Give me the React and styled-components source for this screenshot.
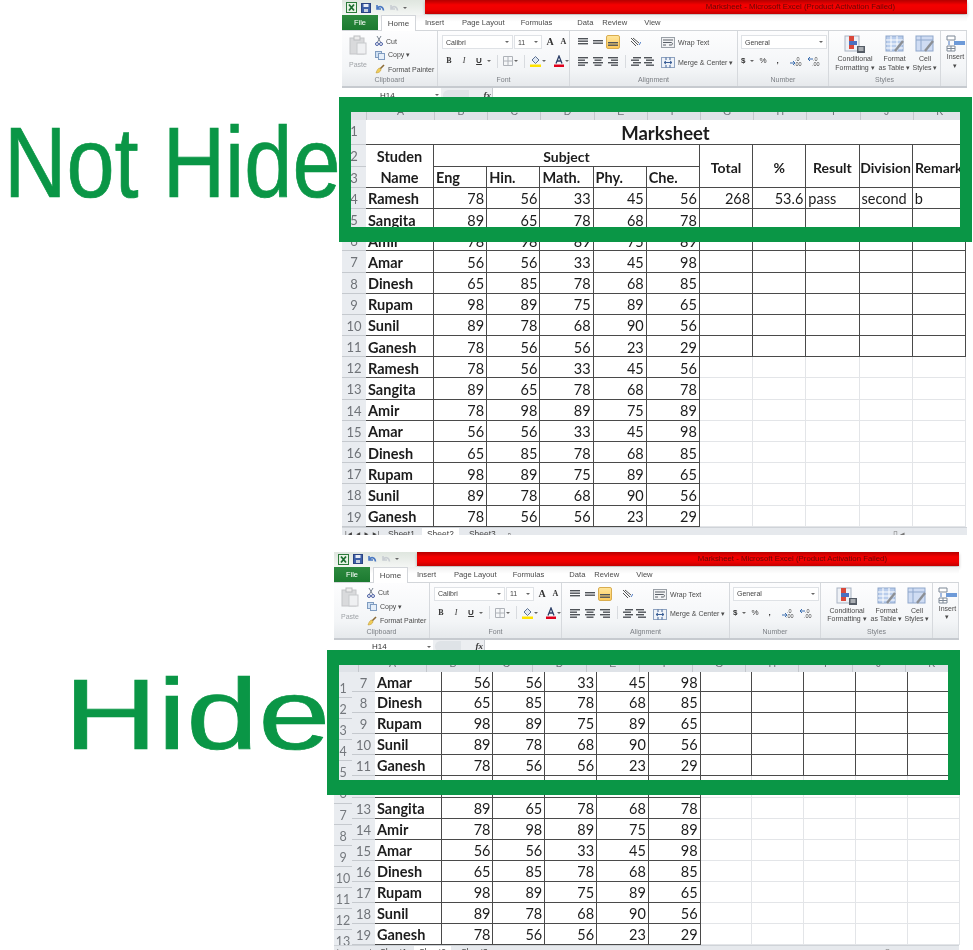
import React from 'react'
import styled, { createGlobalStyle } from 'styled-components'

const GREEN = '#0a9646'

const Global = createGlobalStyle`
  html, body { margin: 0; padding: 0; background: #fff; }
  body { width: 973px; height: 950px; overflow: hidden; font-family: "Liberation Sans", Arial, sans-serif; }
`

const Page = styled.div`
  display: flex;
  flex-direction: column;
  gap: 17px;
  width: 973px;
`

const Section = styled.section`
  display: flex;
  align-items: flex-start;
`

const LabelSlot = styled.div`
  flex: none;
  width: ${({ $width }) => $width}px;
  padding-top: 112px;
`

const BigLabel = styled.div`
  margin-left: ${({ $left }) => $left}px;
  font: 100px/100px "Liberation Sans", Arial, sans-serif;
  color: ${GREEN};
  -webkit-text-stroke: 0.7px ${GREEN};
  white-space: nowrap;
  transform: scaleX(${({ $scale }) => $scale});
  transform-origin: left center;
`

const ShotWrap = styled.div`
  position: relative;
  flex: none;
  width: 625px;
`

const Shot = styled.div`
  display: flex;
  flex-direction: column;
  filter: blur(0.4px);
  color: #4a4a4a;
  font-size: 7px;
`

const Frame = styled.div`
  position: absolute;
  left: ${({ $left }) => $left}px;
  top: ${({ $top }) => $top}px;
  width: 633px;
  height: 145px;
  box-sizing: border-box;
  border: solid ${GREEN};
  border-width: 15px 12px;
`

/* title bar */
const TitleBar = styled.div`
  display: flex;
  height: 15px;
`

const QuickAccess = styled.div`
  display: flex;
  align-items: center;
  gap: 4px;
  width: 83px;
  padding-left: 4px;
  box-sizing: border-box;
  background: linear-gradient(#dfe6df, #f4f6f4);
`

const RedBar = styled.div`
  flex: 1;
  text-align: right;
  padding-right: 72px;
  font-size: 7.8px;
  line-height: 14px;
  height: 14px;
  color: #640806;
  background: linear-gradient(#b40000, #f50000 35%, #ee0000 70%, #c20000);
  box-shadow: 0 2px 3px rgba(0, 0, 0, 0.28);
`

/* tabs */
const TabRow = styled.div`
  display: flex;
  align-items: stretch;
  height: 16px;
  background: linear-gradient(#f0f0f0, #fff 45%);
  border-bottom: 1px solid #d3d6da;
  box-sizing: border-box;
`

const FileTab = styled.div`
  width: 36px;
  margin-right: 3px;
  text-align: center;
  line-height: 15px;
  color: #fff;
  font-size: 7.5px;
  background: linear-gradient(#2d8a3f, #1c7a30);
`

const HomeTab = styled.div`
  width: 35px;
  height: 16px;
  box-sizing: border-box;
  text-align: center;
  line-height: 15px;
  font-size: 8px;
  background: #fff;
  border: 1px solid #d3d6da;
  border-bottom: 0;
`

const Tab = styled.div`
  line-height: 15px;
  font-size: 7.6px;
  margin-left: ${({ $gap }) => $gap}px;
`

/* ribbon */
const Ribbon = styled.div`
  display: flex;
  height: 57px;
  box-sizing: border-box;
  background: linear-gradient(#fdfdfe, #f3f5f7 70%, #e6e9ec);
  border-bottom: 2px solid #c6cacf;
`

const Group = styled.div`
  flex: none;
  display: flex;
  flex-direction: column;
  width: ${({ $width }) => $width}px;
  box-sizing: border-box;
  border-right: 1px solid #d6d9dd;
`

const GroupBody = styled.div`
  flex: 1;
  display: flex;
  gap: ${({ $gap }) => $gap || 0}px;
  padding: 4px 0 0 ${({ $pad }) => $pad || 0}px;
`

const GroupName = styled.div`
  height: 11px;
  line-height: 10px;
  text-align: center;
  color: #7b7f84;
  font-size: 7px;
`

const PasteCol = styled.div`
  width: 26px;
  display: flex;
  flex-direction: column;
  align-items: flex-start;
  color: #a0a4a8;
  line-height: 9px;
  gap: 5px;
`

const SmallCol = styled.div`
  display: flex;
  flex-direction: column;
  gap: 4px;
  padding-top: 1px;
`

const SmallRow = styled.div`
  display: flex;
  align-items: center;
  gap: ${({ $gap }) => $gap ?? 3}px;
  height: ${({ $height }) => $height || 10}px;
  white-space: nowrap;
`

const Stack = styled.div`
  display: flex;
  flex-direction: column;
  gap: ${({ $gap }) => $gap ?? 5}px;
  padding-top: ${({ $top }) => $top || 0}px;
`

const Field = styled.div`
  width: ${({ $width }) => $width}px;
  height: 14px;
  box-sizing: border-box;
  display: flex;
  align-items: center;
  justify-content: space-between;
  padding: 0 3px;
  background: #fff;
  border: 1px solid #dfe2e6;
  color: #444;
  font-size: 7px;
`

const Caret = styled.span`
  width: 0;
  height: 0;
  border: 2px solid transparent;
  border-top: 2.5px solid #666;
  border-bottom: 0;
  flex: none;
`

const Glyph = styled.span`
  font: ${({ $bold }) => ($bold ? 700 : 400)} ${({ $size }) => $size || 8}px/1 ${({ $serif }) =>
    $serif ? '"Liberation Serif", serif' : '"Liberation Sans", sans-serif'};
  font-style: ${({ $italic }) => ($italic ? 'italic' : 'normal')};
  text-decoration: ${({ $under }) => ($under ? 'underline' : 'none')};
  color: ${({ $color }) => $color || '#333'};
`

const ToolCell = styled.span`
  display: inline-flex;
  align-items: center;
  justify-content: center;
  flex: none;
  width: ${({ $width }) => $width || 14}px;
  height: 14px;
  border-radius: 2px;
  background: ${({ $on }) => ($on ? 'linear-gradient(#ffe59a, #fdc95a)' : 'none')};
  border: ${({ $on }) => ($on ? '1px solid #d9ad4f' : '0')};
  box-sizing: border-box;
`

const Divider = styled.span`
  width: 1px;
  height: 13px;
  background: #d8dbdf;
`

const BigButton = styled.div`
  display: flex;
  flex-direction: column;
  align-items: center;
  width: ${({ $width }) => $width}px;
  text-align: center;
  line-height: 8.5px;
  gap: 1px;
  white-space: nowrap;
`

/* formula bar */
const FormulaBar = styled.div`
  display: flex;
  align-items: center;
  height: 14px;
  margin-bottom: 2px;
  background: #eceef1;
`

const NameBox = styled.div`
  display: flex;
  align-items: center;
  justify-content: space-between;
  width: 99px;
  height: 100%;
  box-sizing: border-box;
  padding: 0 2px 0 38px;
  background: #fff;
  color: #333;
  font-size: 8px;
`

const FxZone = styled.div`
  display: flex;
  align-items: center;
  justify-content: space-between;
  width: 51px;
  padding: 0 1px 0 2px;
  box-sizing: border-box;
`

const Bubble = styled.span`
  width: 26px;
  height: 11px;
  border-radius: 6px 0 0 6px;
  background: #dfe3e7;
`

const FormulaInput = styled.div`
  flex: 1;
  height: 100%;
  background: #fff;
  border-left: 1px solid #c9cdd2;
`

/* sheet */
const ColumnHeader = styled.div`
  display: flex;
  height: 16px;
  overflow: hidden;
  background: #dfe3e8;
  font: 10.5px/15px "Liberation Sans", sans-serif;
  color: #6d7177;
`

const Corner = styled.div`
  flex: none;
  width: 24px;
  border-right: 1px solid #c3c7cc;
`

const ColumnName = styled.div`
  flex: none;
  width: ${({ $width }) => $width}px;
  text-align: center;
  box-sizing: border-box;
  border-right: 1px solid #c3c7cc;
`

const SheetBody = styled.div`
  display: flex;
`

const RowStrip = styled.div`
  flex: none;
  width: 18px;
  padding-top: 5px;
  box-sizing: border-box;
  background: #e9ecf0;
  overflow: hidden;
  height: ${({ $height }) => $height}px;
`

const StripNumber = styled.div`
  height: 21.14px;
  box-sizing: border-box;
  text-align: center;
  font: 400 12.5px/24px Lato, sans-serif;
  color: #74787d;
  border-bottom: 1px solid #c5c9ce;
`

const Grid = styled.div`
  display: grid;
  grid-template-columns: ${({ $columns }) => $columns};
  grid-template-rows: ${({ $rows }) => $rows};
  background: #fff;
`

const RowHead = styled.div`
  background: #e9ecf0;
  color: #6f7378;
  font: 400 13px/23px Lato, sans-serif;
  text-align: center;
  box-sizing: border-box;
  border-bottom: 1px solid #c5c9ce;
  overflow: hidden;
`

const Cell = styled.div`
  grid-column: span ${({ $cols }) => $cols || 1};
  grid-row: span ${({ $rows }) => $rows || 1};
  display: flex;
  align-items: center;
  justify-content: ${({ $align }) => $align || 'flex-start'};
  padding: 2px 2px 0;
  box-sizing: border-box;
  min-width: 0;
  white-space: nowrap;
  font-family: Lato, sans-serif;
  font-size: ${({ $size }) => $size || 14.5}px;
  font-weight: ${({ $bold }) => ($bold ? 700 : 400)};
  color: #1c1c1c;
  border-right: 1px solid ${({ $light }) => ($light ? '#e3e5e8' : '#4a4a4a')};
  border-bottom: ${({ $open, $light }) =>
    $open ? '0' : `1px solid ${$light ? '#e3e5e8' : '#4a4a4a'}`};
`

const SheetTabs = styled.div`
  display: flex;
  height: 8px;
  overflow: hidden;
  background: #e6e9ed;
  border-top: 1px solid #cfd3d8;
  box-sizing: border-box;
  font-size: 8.5px;
  line-height: 12px;
  color: #444;
`

const SheetNav = styled.div`
  flex: none;
  width: 43px;
  margin-left: 3px;
  font-size: 6.5px;
  white-space: nowrap;
`

const SheetTab = styled.div`
  padding: 0 ${({ $active }) => ($active ? 5 : 0)}px;
  margin-left: ${({ $gap }) => $gap || 0}px;
  background: ${({ $active }) => ($active ? '#fff' : 'none')};
`

const Scroller = styled.div`
  margin-left: auto;
  margin-right: 62px;
  color: #777;
`

/* drawings */
const Svg = ({ w, h, children }) => (
  <svg width={w} height={h} viewBox={`0 0 ${w} ${h}`} style={{ flex: 'none', display: 'block' }}>
    {children}
  </svg>
)

const Bars = ({ rows, color = '#4f5358' }) => (
  <Svg w={12} h={10}>
    {rows.map(([x, y, w], i) => (
      <rect key={i} x={x} y={y} width={w} height="1.4" fill={color} />
    ))}
  </Svg>
)

const ExcelLogo = () => (
  <Svg w={11} h={11}>
    <rect x="0.5" y="0.5" width="10" height="10" fill="#e9f3e6" stroke="#2b7a3a" />
    <path d="M3 2.5 L8 8.5 M8 2.5 L3 8.5" stroke="#1d6e31" strokeWidth="1.8" />
  </Svg>
)

const SaveIcon = () => (
  <Svg w={10} h={10}>
    <rect x="0.5" y="0.5" width="9" height="9" fill="#3d5fa8" stroke="#2b4482" />
    <rect x="2.5" y="1" width="5" height="3" fill="#e8edf6" />
    <rect x="3" y="6" width="4" height="3" fill="#c7d0df" />
  </Svg>
)

const UndoIcon = ({ color = '#4a78c2' }) => (
  <Svg w={10} h={10}>
    <path d="M2 2 V6 H6 M2.5 5.5 C4 2.5 8 3 8.5 7.5" fill="none" stroke={color} strokeWidth="1.6" />
  </Svg>
)

const PasteIcon = () => (
  <Svg w={18} h={20}>
    <rect x="1" y="3" width="14" height="16" fill="#d9dadc" stroke="#c4c5c8" />
    <rect x="5" y="1" width="6" height="4" fill="#ececec" stroke="#bcbdc0" />
    <rect x="8" y="8" width="9" height="11" fill="#eff0f2" stroke="#c8c9cc" />
  </Svg>
)

const CutIcon = () => (
  <Svg w={8} h={10}>
    <path d="M2 0 L5.5 6 M6 0 L2.5 6" stroke="#7a8490" strokeWidth="1" />
    <circle cx="2" cy="8" r="1.5" fill="none" stroke="#4b5fa3" />
    <circle cx="6" cy="8" r="1.5" fill="none" stroke="#4b5fa3" />
  </Svg>
)

const CopyIcon = () => (
  <Svg w={10} h={9}>
    <rect x="0.5" y="0.5" width="6" height="6" fill="#cfe0f3" stroke="#7f9cc0" />
    <rect x="3.5" y="2.5" width="6" height="6" fill="#e6eff9" stroke="#7f9cc0" />
  </Svg>
)

const BrushIcon = () => (
  <Svg w={10} h={10}>
    <path d="M5 5 L9 1" stroke="#8a6a35" strokeWidth="1.6" />
    <path d="M1 9 C2 6 3 4 5 4 L6 5.5 C6 7.5 3.5 9 1 9 Z" fill="#f0cd5a" stroke="#b89330" strokeWidth="0.5" />
  </Svg>
)

const FillIcon = () => (
  <Svg w={11} h={12}>
    <path d="M2 5 L5.5 1.5 L9 5 L5.5 8.5 Z" fill="#dfe7f2" stroke="#5c7192" />
    <rect x="0" y="9.5" width="11" height="2.5" fill="#ffe300" />
  </Svg>
)

const FontColorIcon = () => (
  <Svg w={10} h={12}>
    <path d="M2 8.5 L5 1 L8 8.5 M3.2 6 H6.8" fill="none" stroke="#2c3e66" strokeWidth="1.3" />
    <rect x="0" y="9.5" width="10" height="2.5" fill="#e0001b" />
  </Svg>
)

const BorderIcon = () => (
  <Svg w={10} h={10}>
    <path d="M0.5 0.5 H9.5 V9.5 H0.5 Z M5 0.5 V9.5 M0.5 5 H9.5" fill="none" stroke="#aeb2b8" />
  </Svg>
)

const OrientIcon = () => (
  <Svg w={11} h={10}>
    <path d="M1 1 L8 8 M3 1 L9 6 M1 4 L6 9" stroke="#555" strokeWidth="1" />
    <path d="M9 8 L11 5" stroke="#4a78c2" strokeWidth="1" />
  </Svg>
)

const WrapIcon = () => (
  <Svg w={14} h={11}>
    <rect x="0.5" y="0.5" width="13" height="10" fill="#f1f2f4" stroke="#9aa0a7" />
    <path d="M2 3 H12 M2 5.5 H10 C12 5.5 12 8 10 8 H8 M2 8 H5" fill="none" stroke="#5a6068" />
  </Svg>
)

const MergeIcon = () => (
  <Svg w={14} h={11}>
    <rect x="0.5" y="0.5" width="13" height="10" fill="#eef2f8" stroke="#8fa3c0" />
    <path d="M5 0.5 V3 M5 8 V10.5 M9 0.5 V3 M9 8 V10.5 M3 5.5 H11 M3 5.5 L5 4 M3 5.5 L5 7 M11 5.5 L9 4 M11 5.5 L9 7" fill="none" stroke="#3b5f96" />
  </Svg>
)

const DecimalIcon = ({ flip }) => (
  <Svg w={13} h={10}>
    <path d={flip ? 'M1 3 H6 M1 3 L3 1 M1 3 L3 5' : 'M1 7 H6 M6 7 L4 5 M6 7 L4 9'} stroke="#3c6fb0" strokeWidth="1" fill="none" />
    <text x="6" y="4.5" fontSize="5.5" fill="#444" fontFamily="Liberation Sans">.0</text>
    <text x="5" y="9.5" fontSize="5.5" fill="#444" fontFamily="Liberation Sans">.00</text>
  </Svg>
)

const CondFormatIcon = () => (
  <Svg w={22} h={19}>
    <rect x="1" y="1" width="14" height="15" fill="#eef1f6" stroke="#a9b4c4" />
    <rect x="5" y="1" width="5" height="5" fill="#d9483b" />
    <rect x="5" y="6" width="8" height="4" fill="#4a6fc0" />
    <rect x="5" y="10" width="5" height="4" fill="#d9483b" />
    <rect x="13" y="11" width="8" height="7" fill="#555c66" />
    <path d="M14.5 13 H19.5 M14.5 15 H19.5" stroke="#fff" />
  </Svg>
)

const TableIcon = ({ plain }) => (
  <Svg w={20} h={19}>
    <rect x="1" y="1" width="17" height="15" fill={plain ? '#cfdcf3' : '#b9cdec'} stroke="#8fa7cc" />
    {plain ? (
      <path d="M1 5 H18 M6 1 V16" stroke="#8fa7cc" />
    ) : (
      <path d="M1 5 H18 M1 9 H18 M1 13 H18 M6 1 V16 M12 1 V16" stroke="#fff" />
    )}
    <path d="M10 16 L18 6" stroke="#8c8f94" strokeWidth="2.4" />
  </Svg>
)

const InsertIcon = () => (
  <Svg w={20} h={17}>
    <path d="M1 1 H9 V5 H1 Z M1 11 H9 V16 H1 Z M5 11 V16 M1 13.5 H9" fill="#fff" stroke="#7d8896" />
    <rect x="8" y="6" width="11" height="4" fill="#6d9ad8" />
    <path d="M3 6 V10" stroke="#4a78c2" />
  </Svg>
)

/* data */
const people = [
  ['Ramesh', 78, 56, 33, 45, 56],
  ['Sangita', 89, 65, 78, 68, 78],
  ['Amir', 78, 98, 89, 75, 89],
  ['Amar', 56, 56, 33, 45, 98],
  ['Dinesh', 65, 85, 78, 68, 85],
  ['Rupam', 98, 89, 75, 89, 65],
  ['Sunil', 89, 78, 68, 90, 56],
  ['Ganesh', 78, 56, 56, 23, 29],
]

const rowOf = (n) => people[(n - 4) % 8]
const columnNames = 'ABCDEFGHIJK'.split('')
const tabs = [
  ['Insert', 9],
  ['Page Layout', 18],
  ['Formulas', 16],
  ['Data', 25],
  ['Review', 9],
  ['View', 17],
]

const Ribbonbar = () => (
  <Ribbon>
    <Group $width={96}>
      <GroupBody $pad={7}>
        <PasteCol>
          <PasteIcon />
          <span>Paste</span>
        </PasteCol>
        <SmallCol>
          <SmallRow><CutIcon /><span>Cut</span></SmallRow>
          <SmallRow><CopyIcon /><span>Copy ▾</span></SmallRow>
          <SmallRow><BrushIcon /><span>Format Painter</span></SmallRow>
        </SmallCol>
      </GroupBody>
      <GroupName>Clipboard</GroupName>
    </Group>
    <Group $width={132}>
      <GroupBody $pad={4}>
        <Stack>
          <SmallRow $height={14} $gap={1}>
            <Field $width={71}>Calibri<Caret /></Field>
            <Field $width={28}>11<Caret /></Field>
            <ToolCell><Glyph $serif $bold $size={10}>A</Glyph></ToolCell>
            <ToolCell $width={11}><Glyph $serif $bold $size={8}>A</Glyph></ToolCell>
          </SmallRow>
          <SmallRow $height={14} $gap={1}>
            <ToolCell><Glyph $serif $bold>B</Glyph></ToolCell>
            <ToolCell><Glyph $serif $italic>I</Glyph></ToolCell>
            <ToolCell><Glyph $under $bold>U</Glyph></ToolCell>
            <Caret />
            <ToolCell $width={10}><Divider /></ToolCell>
            <BorderIcon />
            <Caret />
            <ToolCell $width={10}><Divider /></ToolCell>
            <FillIcon />
            <Caret />
            <ToolCell $width={6} />
            <FontColorIcon />
            <Caret />
          </SmallRow>
        </Stack>
      </GroupBody>
      <GroupName>Font</GroupName>
    </Group>
    <Group $width={168}>
      <GroupBody $pad={6} $gap={6}>
        <Stack $gap={5}>
          <SmallRow $height={14} $gap={1}>
            <ToolCell><Bars rows={[[1, 1, 10], [1, 3.5, 10], [1, 6, 10]]} /></ToolCell>
            <ToolCell><Bars rows={[[1, 3, 10], [1, 5.5, 10]]} /></ToolCell>
            <ToolCell $on><Bars rows={[[1, 5, 10], [1, 7.5, 10]]} /></ToolCell>
            <ToolCell $width={8} />
            <OrientIcon />
          </SmallRow>
          <SmallRow $height={14} $gap={1}>
            <ToolCell><Bars rows={[[1, 1, 10], [1, 3.5, 7], [1, 6, 10], [1, 8.5, 7]]} /></ToolCell>
            <ToolCell><Bars rows={[[1, 1, 10], [2.5, 3.5, 7], [1, 6, 10], [2.5, 8.5, 7]]} /></ToolCell>
            <ToolCell><Bars rows={[[1, 1, 10], [4, 3.5, 7], [1, 6, 10], [4, 8.5, 7]]} /></ToolCell>
            <ToolCell $width={8}><Divider /></ToolCell>
            <Bars rows={[[3, 1, 8], [1, 3.5, 8], [3, 6, 8], [1, 8.5, 8]]} />
            <Bars rows={[[1, 1, 8], [3, 3.5, 8], [1, 6, 8], [3, 8.5, 8]]} />
          </SmallRow>
        </Stack>
        <Stack $gap={7} $top={1}>
          <SmallRow $height={13}><WrapIcon /><span>Wrap Text</span></SmallRow>
          <SmallRow $height={13}><MergeIcon /><span>Merge &amp; Center ▾</span></SmallRow>
        </Stack>
      </GroupBody>
      <GroupName>Alignment</GroupName>
    </Group>
    <Group $width={91}>
      <GroupBody $pad={3}>
        <Stack $gap={5}>
          <Field $width={86}>General<Caret /></Field>
          <SmallRow $height={14} $gap={5}>
            <Glyph $bold $size={8}>$</Glyph>
            <Caret />
            <Glyph $size={8}>%</Glyph>
            <ToolCell $width={12}><Glyph $bold>,</Glyph></ToolCell>
            <DecimalIcon />
            <DecimalIcon flip />
          </SmallRow>
        </Stack>
      </GroupBody>
      <GroupName>Number</GroupName>
    </Group>
    <Group $width={112}>
      <GroupBody $pad={3}>
        <BigButton $width={46}><CondFormatIcon /><span>Conditional<br />Formatting ▾</span></BigButton>
        <BigButton $width={33}><TableIcon /><span>Format<br />as Table ▾</span></BigButton>
        <BigButton $width={28}><TableIcon plain /><span>Cell<br />Styles ▾</span></BigButton>
      </GroupBody>
      <GroupName>Styles</GroupName>
    </Group>
    <Group $width={26}>
      <GroupBody $pad={4}>
        <BigButton $width={22}><InsertIcon /><span>Insert<br />▾</span></BigButton>
      </GroupBody>
    </Group>
  </Ribbon>
)

const ExcelChrome = () => (
  <>
    <TitleBar>
      <QuickAccess>
        <ExcelLogo />
        <SaveIcon />
        <UndoIcon />
        <UndoIcon color="#c9ced3" />
        <Caret />
      </QuickAccess>
      <RedBar>Marksheet  -  Microsoft Excel (Product Activation Failed)</RedBar>
    </TitleBar>
    <TabRow>
      <FileTab>File</FileTab>
      <HomeTab>Home</HomeTab>
      {tabs.map(([name, gap]) => (
        <Tab key={name} $gap={gap}>{name}</Tab>
      ))}
    </TabRow>
    <Ribbonbar />
    <FormulaBar>
      <NameBox>H14<Caret /></NameBox>
      <FxZone>
        <Bubble />
        <Glyph $serif $italic $bold $size={9}>fx</Glyph>
      </FxZone>
      <FormulaInput />
    </FormulaBar>
    <ColumnHeader>
      <Corner />
      <ColumnName $width={68}>A</ColumnName>
      {columnNames.slice(1).map((c) => (
        <ColumnName key={c} $width={53.2}>{c}</ColumnName>
      ))}
    </ColumnHeader>
  </>
)

const BottomBar = () => (
  <SheetTabs>
    <SheetNav>|◄ ◄ ► ►|</SheetNav>
    <SheetTab>Sheet1</SheetTab>
    <SheetTab $active $gap={7}>Sheet2</SheetTab>
    <SheetTab $gap={10}>Sheet3</SheetTab>
    <SheetTab $gap={12}>▫</SheetTab>
    <Scroller>▯ ◂</Scroller>
  </SheetTabs>
)

const DataRow = ({ n, extra }) => {
  const [name, ...marks] = rowOf(n)
  const light = n >= 12
  return (
    <>
      <RowHead>{n}</RowHead>
      <Cell $bold>{name}</Cell>
      {marks.map((m, i) => (
        <Cell key={i} $align="flex-end">{m}</Cell>
      ))}
      {[0, 1, 2, 3, 4].map((i) => (
        <Cell key={i} $light={light} $align={i < 2 ? 'flex-end' : 'flex-start'}>
          {extra && extra[i]}
        </Cell>
      ))}
    </>
  )
}

const rowsFrom = (first, last) =>
  Array.from({ length: last - first + 1 }, (_, i) => first + i)

const fullTemplate = '24px 68px repeat(10, 53.2px)'
const fullRows = '25.4px repeat(18, 21.2px)'
const pastedTemplate = '23px 66.7px repeat(10, 51.8px)'
const pastedRows = '20px 21px 21px 21px 21px 22px repeat(7, 21px)'

const headerNames = ['Total', '%', 'Result', 'Division', 'Remark']

const FullSheet = () => (
  <Grid $columns={fullTemplate} $rows={fullRows}>
    <RowHead>1</RowHead>
    <Cell $cols={11} $align="center" $bold $size={18.5}>Marksheet</Cell>
    <RowHead>2</RowHead>
    <Cell $bold $align="center" $open>Studen</Cell>
    <Cell $cols={5} $bold $size={14} $align="center">Subject</Cell>
    {headerNames.map((h) => (
      <Cell key={h} $rows={2} $bold $size={14} $align="center">{h}</Cell>
    ))}
    <RowHead>3</RowHead>
    <Cell $bold $align="center">Name</Cell>
    {['Eng', 'Hin.', 'Math.', 'Phy.', 'Che.'].map((s) => (
      <Cell key={s} $bold>{s}</Cell>
    ))}
    {rowsFrom(4, 19).map((n) => (
      <DataRow key={n} n={n} extra={n === 4 ? [268, 53.6, 'pass', 'second', 'b'] : null} />
    ))}
  </Grid>
)

const PastedSheet = () => (
  <SheetBody>
    <RowStrip $height={273}>
      {rowsFrom(1, 13).map((n) => (
        <StripNumber key={n}>{n}</StripNumber>
      ))}
    </RowStrip>
    <Grid $columns={pastedTemplate} $rows={pastedRows}>
      {rowsFrom(7, 19).map((n) => (
        <DataRow key={n} n={n} />
      ))}
    </Grid>
  </SheetBody>
)

export default function App() {
  return (
    <Page>
      <Global />
      <Section>
        <LabelSlot $width={342}>
          <BigLabel $left={4} $scale={0.865}>Not Hide</BigLabel>
        </LabelSlot>
        <ShotWrap>
          <Shot>
            <ExcelChrome />
            <FullSheet />
            <BottomBar />
          </Shot>
          <Frame $left={-3} $top={97} />
        </ShotWrap>
      </Section>
      <Section>
        <LabelSlot $width={334}>
          <BigLabel $left={64} $scale={1.295}>Hide</BigLabel>
        </LabelSlot>
        <ShotWrap>
          <Shot>
            <ExcelChrome />
            <PastedSheet />
            <BottomBar />
          </Shot>
          <Frame $left={-7} $top={98} />
        </ShotWrap>
      </Section>
    </Page>
  )
}
